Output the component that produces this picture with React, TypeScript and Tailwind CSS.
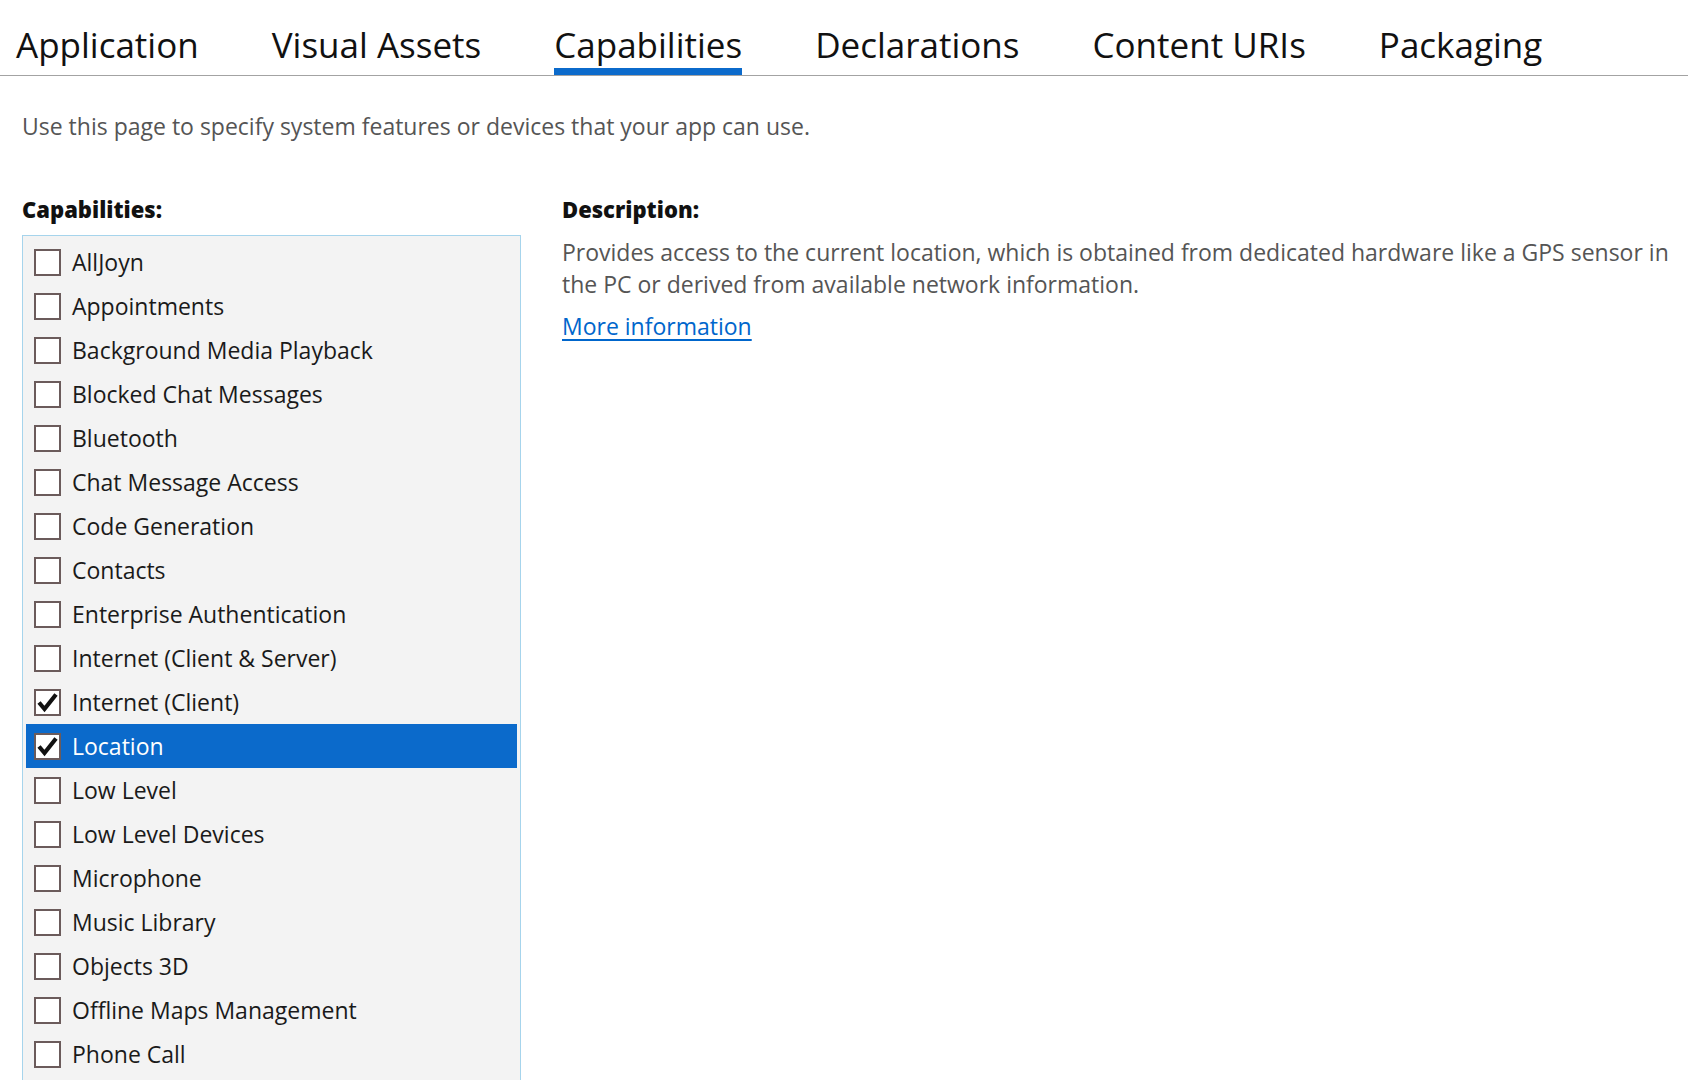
const tabs = ['Application', 'Visual Assets', 'Capabilities', 'Declarations', 'Content URIs', 'Packaging'];

const capabilities: { label: string; checked?: boolean; selected?: boolean }[] = [
  { label: 'AllJoyn' },
  { label: 'Appointments' },
  { label: 'Background Media Playback' },
  { label: 'Blocked Chat Messages' },
  { label: 'Bluetooth' },
  { label: 'Chat Message Access' },
  { label: 'Code Generation' },
  { label: 'Contacts' },
  { label: 'Enterprise Authentication' },
  { label: 'Internet (Client & Server)' },
  { label: 'Internet (Client)', checked: true },
  { label: 'Location', checked: true, selected: true },
  { label: 'Low Level' },
  { label: 'Low Level Devices' },
  { label: 'Microphone' },
  { label: 'Music Library' },
  { label: 'Objects 3D' },
  { label: 'Offline Maps Management' },
  { label: 'Phone Call' },
];

function CheckBox({ checked }: { checked?: boolean }) {
  return (
    <span className="w-[27px] h-[27px] shrink-0 border-2 border-[#6b5b5b] bg-white flex items-center justify-center">
      {checked && (
        <svg width="23" height="23" viewBox="0 0 23 23">
          <path d="M3 11.5 L8.5 18 L20 3.5" fill="none" stroke="#111" strokeWidth="4.2" strokeLinejoin="miter" />
        </svg>
      )}
    </span>
  );
}

export default function App() {
  return (
    <div className="h-[1080px] overflow-hidden bg-white text-[#1a1a1a]" style={{ fontFamily: '"Open Sans", "Noto Sans", sans-serif' }}>
      {/* tab strip */}
      <div className="flex gap-[73px] pl-[16px] border-b border-[#a3a3a3] h-[76px] items-end">
        {tabs.map(t => (
          <div key={t} className="flex flex-col">
            <span className="text-[35px] leading-[44px] text-[#111]">{t}</span>
            <span className={`h-[7px] mt-[1px] ${t === 'Capabilities' ? 'bg-[#0b6acb]' : 'bg-transparent'}`} />
          </div>
        ))}
      </div>

      <div className="pl-[22px] pr-[10px]">
        <p className="mt-[36px] text-[23px] leading-[28px] text-[#555]">
          Use this page to specify system features or devices that your app can use.
        </p>

        <div className="flex gap-[41px] mt-[55px]">
          <div className="w-[499px] shrink-0">
            <h2 className="text-[22px] leading-[28px] font-black text-[#111]">Capabilities:</h2>
            <div className="mt-[12px] border border-[#a6d4ec] bg-[#f3f3f3] px-[3px] pt-[4px] pb-[60px]">
              {capabilities.map(c => (
                <div
                  key={c.label}
                  className={`h-[44px] flex items-center pl-[8px] gap-[11px] ${c.selected ? 'bg-[#0b6acb] text-white' : ''}`}
                >
                  <CheckBox checked={c.checked} />
                  <span className="text-[23px] leading-[28px]">{c.label}</span>
                </div>
              ))}
            </div>
          </div>

          <div className="flex-1">
            <h2 className="text-[22px] leading-[28px] font-black text-[#111]">Description:</h2>
            <p className="mt-[13px] text-[23px] leading-[32px] text-[#555]">
              Provides access to the current location, which is obtained from dedicated hardware like a GPS sensor in the PC or derived from available network information.
            </p>
            <a href="#" className="inline-block mt-[11px] text-[23px] leading-[30px] text-[#0066cc] underline underline-offset-[4px]">
              More information
            </a>
          </div>
        </div>
      </div>
    </div>
  );
}
